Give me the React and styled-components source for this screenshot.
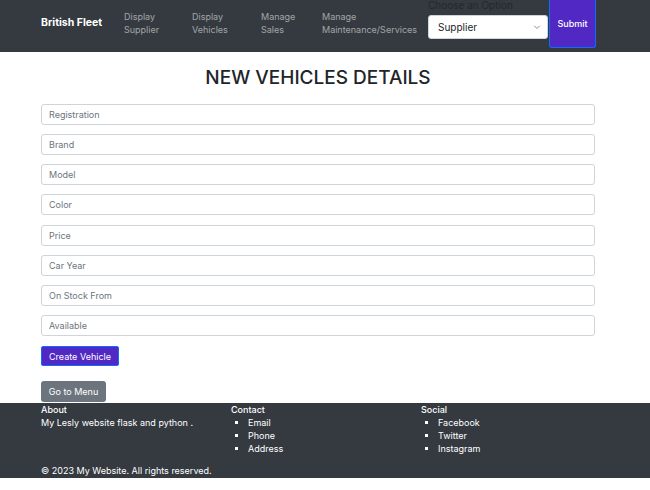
import React from "react";
import styled, { createGlobalStyle } from "styled-components";

const GlobalStyle = createGlobalStyle`
  * { box-sizing: border-box; }
  body {
    margin: 0;
    background: #fff;
    font-family: Inter, "Noto Sans", sans-serif;
    font-size: 9px;
    line-height: 1.5;
    color: #212529;
  }
`;

const fields = [
  "Registration",
  "Brand",
  "Model",
  "Color",
  "Price",
  "Car Year",
  "On Stock From",
  "Available",
];

const links = [
  { label: "Display Supplier", width: 68 },
  { label: "Display Vehicles", width: 69 },
  { label: "Manage Sales", width: 61 },
  { label: "Manage Maintenance/Services", width: 106 },
];

const App = () => {
  return (
    <>
      <GlobalStyle />
      <Navbar>
        <Brand>British Fleet</Brand>
        {links.map((l) => (
          <NavLink key={l.label} $width={l.width}>
            {l.label}
          </NavLink>
        ))}
        <NavForm>
          <FormGroup>
            <Label>Choose an Option</Label>
            <SelectWrap>
              <Select defaultValue="Supplier">
                <option>Supplier</option>
                <option>Vehicles</option>
              </Select>
              <Chevron width="8" height="8" viewBox="0 0 16 16">
                <path
                  d="M3 6l5 5 5-5"
                  fill="none"
                  stroke="#6c757d"
                  strokeWidth="1.6"
                  strokeLinecap="round"
                  strokeLinejoin="round"
                />
              </Chevron>
            </SelectWrap>
          </FormGroup>
          <SubmitButton>Submit</SubmitButton>
        </NavForm>
      </Navbar>

      <Main>
        <Title>NEW VEHICLES DETAILS</Title>
        <Form>
          {fields.map((f) => (
            <Input key={f} placeholder={f} />
          ))}
          <PrimaryButton type="button">Create Vehicle</PrimaryButton>
        </Form>
        <MenuButton type="button">Go to Menu</MenuButton>
      </Main>

      <Footer>
        <FooterGrid>
          <FooterCol>
            <FooterTitle>About</FooterTitle>
            <FooterText>My Lesly website flask and python .</FooterText>
          </FooterCol>
          <FooterCol>
            <FooterTitle>Contact</FooterTitle>
            <FooterList>
              <li>Email</li>
              <li>Phone</li>
              <li>Address</li>
            </FooterList>
          </FooterCol>
          <FooterCol>
            <FooterTitle>Social</FooterTitle>
            <FooterList>
              <li>Facebook</li>
              <li>Twitter</li>
              <li>Instagram</li>
            </FooterList>
          </FooterCol>
        </FooterGrid>
        <Copyright>© 2023 My Website. All rights reserved.</Copyright>
      </Footer>
    </>
  );
};

export default App;

const Navbar = styled.nav`
  display: flex;
  align-items: center;
  height: 52px;
  padding: 0 0 6px 41px;
  background: #343a40;
`;

const Brand = styled.a`
  width: 83px;
  font-size: 10.5px;
  font-weight: 700;
  color: #fff;
`;

const NavLink = styled.a`
  width: ${(p) => p.$width}px;
  padding-right: 8px;
  font-size: 9px;
  line-height: 13.5px;
  color: rgba(255, 255, 255, 0.55);
`;

const NavForm = styled.form`
  display: flex;
  align-self: flex-start;
`;

const FormGroup = styled.div`
  display: flex;
  flex-direction: column;
  width: 121px;
  margin-top: -1px;
`;

const Label = styled.label`
  font-size: 10px;
  line-height: 13px;
  color: #24282d;
  margin-bottom: 3px;
`;

const SelectWrap = styled.div`
  position: relative;
`;

const Select = styled.select`
  appearance: none;
  width: 120px;
  height: 24px;
  padding: 0 20px 0 9px;
  border: 1px solid #ced4da;
  border-radius: 3px;
  background: #fff;
  font-family: Inter, "Noto Sans", sans-serif;
  font-size: 10px;
  color: #212529;
`;

const Chevron = styled.svg`
  position: absolute;
  right: 8px;
  top: 8px;
  pointer-events: none;
`;

const SubmitButton = styled.button`
  width: 47px;
  height: 48px;
  border: 1px solid #0d6efd;
  border-top: none;
  border-radius: 0 0 3px 3px;
  background: #5128c4;
  color: #fff;
  font-family: Inter, "Noto Sans", sans-serif;
  font-size: 9px;
  font-weight: 500;
`;

const Main = styled.main`
  width: 554px;
  margin-left: 41px;
  padding-top: 14px;
`;

const Title = styled.h1`
  margin: 0 0 15px;
  text-align: center;
  font-size: 19px;
  font-weight: 500;
  line-height: 23px;
  color: #212529;
`;

const Form = styled.form`
  display: flex;
  flex-direction: column;
  align-items: flex-start;
  gap: 9.14px;
`;

const Input = styled.input`
  width: 100%;
  height: 21px;
  padding: 0 7px;
  border: 1px solid #ced4da;
  border-radius: 3px;
  font-family: Inter, "Noto Sans", sans-serif;
  font-size: 9px;
  color: #212529;
  &::placeholder {
    color: #6c757d;
  }
`;

const PrimaryButton = styled.button`
  width: 78px;
  height: 20px;
  margin-top: 1px;
  padding: 0;
  border: 1px solid #0d6efd;
  border-radius: 2px;
  background: #5128c4;
  color: #fff;
  font-family: Inter, "Noto Sans", sans-serif;
  font-size: 9px;
`;

const MenuButton = styled.button`
  display: block;
  width: 65px;
  height: 21px;
  margin-top: 15px;
  padding: 0;
  border: none;
  border-radius: 3px;
  background: #6c757d;
  color: #fff;
  font-family: Inter, "Noto Sans", sans-serif;
  font-size: 9px;
`;

const Footer = styled.footer`
  margin-top: 1px;
  padding: 0 0 0 41px;
  background: #343a40;
  color: #fff;
`;

const FooterGrid = styled.div`
  display: grid;
  grid-template-columns: repeat(3, 190px);
`;

const FooterCol = styled.div`
  display: flex;
  flex-direction: column;
`;

const FooterTitle = styled.h5`
  margin: 0;
  font-size: 9px;
  font-weight: 500;
  line-height: 13px;
`;

const FooterText = styled.p`
  margin: 0;
  line-height: 13px;
`;

const FooterList = styled.ul`
  margin: 0;
  padding-left: 17px;
  line-height: 13px;
  list-style: square;
`;

const Copyright = styled.p`
  margin: 9px 0 0;
  line-height: 14px;
`;
